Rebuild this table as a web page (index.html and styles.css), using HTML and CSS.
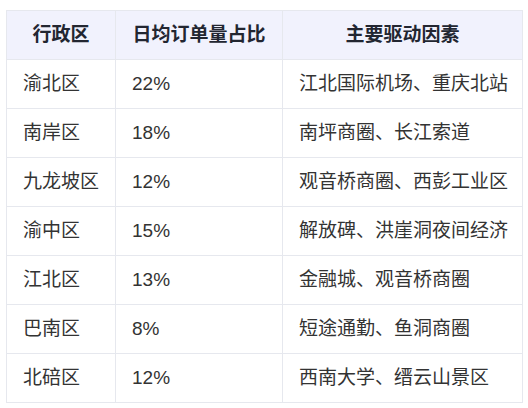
FILE: index.html
```html
<!DOCTYPE html>
<html lang="zh-CN">
<head>
<meta charset="utf-8">
<link rel="stylesheet" href="styles.css">
</head>
<body>
<div class="wrap">
<table class="data">
  <colgroup>
    <col class="c1"><col class="c2"><col class="c3">
  </colgroup>
  <thead>
    <tr><th>行政区</th><th>日均订单量占比</th><th>主要驱动因素</th></tr>
  </thead>
  <tbody>
    <tr><td>渝北区</td><td>22%</td><td>江北国际机场、重庆北站</td></tr>
    <tr><td>南岸区</td><td>18%</td><td>南坪商圈、长江索道</td></tr>
    <tr><td>九龙坡区</td><td>12%</td><td>观音桥商圈、西彭工业区</td></tr>
    <tr><td>渝中区</td><td>15%</td><td>解放碑、洪崖洞夜间经济</td></tr>
    <tr><td>江北区</td><td>13%</td><td>金融城、观音桥商圈</td></tr>
    <tr><td>巴南区</td><td>8%</td><td>短途通勤、鱼洞商圈</td></tr>
    <tr><td>北碚区</td><td>12%</td><td>西南大学、缙云山景区</td></tr>
  </tbody>
</table>
</div>
</body>
</html>
```
FILE: styles.css
```css
html, body {
  margin: 0;
  padding: 0;
  background: #ffffff;
}
.wrap {
  padding: 10px 0 0 6px;
}
.data {
  border-collapse: collapse;
  table-layout: fixed;
  width: 516px;
  font-family: "Liberation Sans", "Noto Sans CJK SC", sans-serif;
  font-size: 19px;
  color: #333333;
}
.c1 { width: 109px; }
.c2 { width: 167px; }
.c3 { width: 240px; }
.data th, .data td {
  border: 1px solid #e6e8ee;
  height: 49px;
  padding: 0 16px;
  white-space: nowrap;
  box-sizing: border-box;
  line-height: 1.2;
}
.data th {
  background: #f1f2fd;
  color: #222631;
  font-weight: 700;
  text-align: center;
}
.data td {
  text-align: left;
}
```
